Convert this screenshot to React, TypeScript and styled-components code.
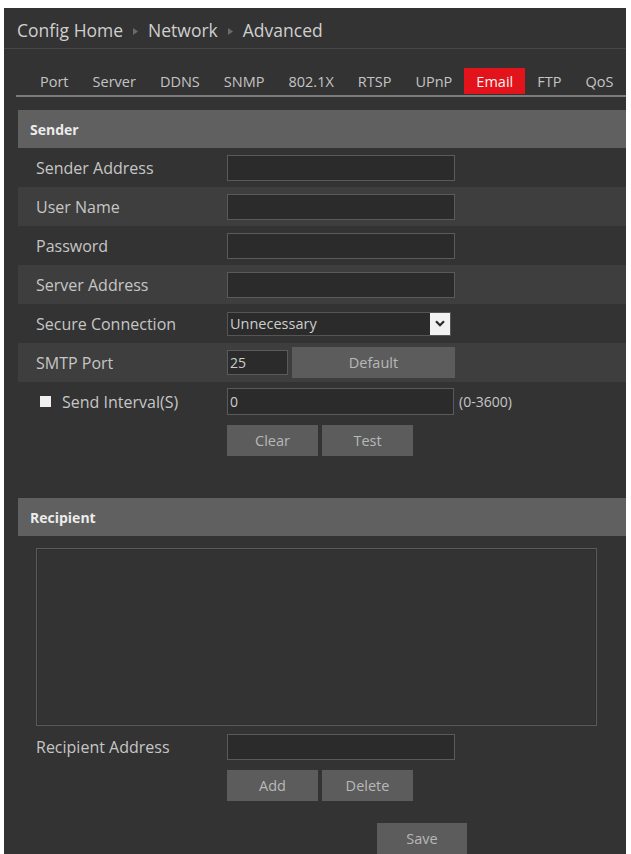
import React from "react";
import styled, { createGlobalStyle } from "styled-components";

const GlobalStyle = createGlobalStyle`
  html, body {
    margin: 0;
    padding: 0;
    background: #ffffff;
  }
  body {
    font-family: "Open Sans", "Noto Sans", sans-serif;
  }
  * {
    box-sizing: border-box;
  }
`;

const Page = styled.div`
  width: 631px;
  padding: 8px 5px 0 4px;
`;

const Panel = styled.div`
  background: #333333;
  min-height: 846px;
  display: flex;
  flex-direction: column;
  color: #c8c8c8;
`;

const Breadcrumb = styled.nav`
  height: 41px;
  display: flex;
  align-items: center;
  gap: 10px;
  padding: 6px 0 0 13px;
  font-size: 17.5px;
  color: #cfcfcf;
  border-bottom: 1px solid #474747;
`;

const Crumb = styled.span`
  line-height: 1;
`;

const CrumbArrow = () => (
  <svg width="5" height="7" viewBox="0 0 5 7" aria-hidden="true">
    <path d="M0 0 L5 3.5 L0 7 Z" fill="#6a6a6a" />
  </svg>
);

const TabBar = styled.div`
  height: 48px;
  margin-left: 12px;
  padding: 0 0 1px 12px;
  display: flex;
  align-items: flex-end;
  border-bottom: 2px solid #7c7c7c;
`;

const Tab = styled.span<{ $active?: boolean }>`
  height: 26px;
  padding: 0 12px;
  display: flex;
  align-items: center;
  font-size: 14.5px;
  color: ${(p) => (p.$active ? "#f4f4f4" : "#c4c4c4")};
  background: ${(p) => (p.$active ? "#e3131c" : "transparent")};
`;

const Section = styled.section<{ $top: number }>`
  margin: ${(p) => p.$top}px 0 0 14px;
  display: flex;
  flex-direction: column;
`;

const SectionHeader = styled.div`
  height: 38px;
  padding-left: 12px;
  display: flex;
  align-items: center;
  background: #606060;
  color: #ececec;
  font-size: 14px;
  font-weight: 700;
`;

const Row = styled.div<{ $shaded?: boolean; $top?: number }>`
  display: grid;
  grid-template-columns: 191px 1fr;
  align-items: center;
  height: 39px;
  margin-top: ${(p) => p.$top ?? 0}px;
  padding-left: 18px;
  background: ${(p) => (p.$shaded ? "#3e3e3e" : "transparent")};
`;

const Label = styled.span`
  font-size: 16px;
  color: #c6c6c6;
  display: flex;
  align-items: center;
`;

const Field = styled.div`
  display: flex;
  align-items: center;
  gap: 4px;
`;

const TextInput = styled.input<{ $w: number; $h?: number }>`
  width: ${(p) => p.$w}px;
  height: ${(p) => p.$h ?? 26}px;
  padding: 0 2px;
  background: #2b2b2b;
  border: 1px solid #5a5a5a;
  color: #cdcdcd;
  font-family: "Open Sans", sans-serif;
  font-size: 14px;
  outline: none;
`;

const SelectBox = styled.div`
  width: 224px;
  height: 24px;
  display: flex;
  align-items: center;
  background: #2b2b2b;
  border: 1px solid #555555;
  padding-left: 2px;
`;

const SelectValue = styled.span`
  flex: 1;
  font-size: 14.5px;
  color: #cdcdcd;
`;

const SelectArrow = styled.span`
  width: 20px;
  height: 22px;
  background: #f2f2f2;
  display: flex;
  align-items: center;
  justify-content: center;
`;

const Checkbox = styled.span`
  width: 11px;
  height: 11px;
  margin: 0 11px 0 4px;
  background: #f0f0f0;
`;

const Hint = styled.span`
  margin-left: 1px;
  font-size: 14px;
  color: #c6c6c6;
`;

const Button = styled.button<{ $w?: number }>`
  width: ${(p) => p.$w ?? 91}px;
  height: 31px;
  border: none;
  background: #5c5c5c;
  color: #b8b8b8;
  font-family: "Open Sans", sans-serif;
  font-size: 14.5px;
  padding: 0;
`;

const ActionRow = styled.div<{ $top: number }>`
  display: grid;
  grid-template-columns: 191px auto;
  margin-top: ${(p) => p.$top}px;
  padding-left: 18px;
  justify-content: start;
`;

const ButtonGroup = styled.div`
  display: flex;
  gap: 4px;
`;

const RecipientList = styled.div`
  margin: 12px 0 0 18px;
  width: 561px;
  height: 178px;
  border: 1px solid #5a5a5a;
  box-shadow: inset 0 0 0 1px #2e2e2e;
`;

const SaveBar = styled.div`
  margin-top: 22px;
  padding-left: 359px;
  display: flex;
`;

const tabs = ["Port", "Server", "DDNS", "SNMP", "802.1X", "RTSP", "UPnP", "Email", "FTP", "QoS"];

export default function App() {
  return (
    <>
      <GlobalStyle />
      <Page>
        <Panel>
          <Breadcrumb>
            <Crumb>Config Home</Crumb>
            <CrumbArrow />
            <Crumb>Network</Crumb>
            <CrumbArrow />
            <Crumb>Advanced</Crumb>
          </Breadcrumb>

          <TabBar>
            {tabs.map((t) => (
              <Tab key={t} $active={t === "Email"}>
                {t}
              </Tab>
            ))}
          </TabBar>

          <Section $top={13}>
            <SectionHeader>Sender</SectionHeader>
            <Row>
              <Label>Sender Address</Label>
              <Field>
                <TextInput $w={228} />
              </Field>
            </Row>
            <Row $shaded>
              <Label>User Name</Label>
              <Field>
                <TextInput $w={228} />
              </Field>
            </Row>
            <Row>
              <Label>Password</Label>
              <Field>
                <TextInput $w={228} type="password" />
              </Field>
            </Row>
            <Row $shaded>
              <Label>Server Address</Label>
              <Field>
                <TextInput $w={228} />
              </Field>
            </Row>
            <Row>
              <Label>Secure Connection</Label>
              <Field>
                <SelectBox>
                  <SelectValue>Unnecessary</SelectValue>
                  <SelectArrow>
                    <svg width="10" height="7" viewBox="0 0 10 7" aria-hidden="true">
                      <path d="M1 1.2 L5 5.2 L9 1.2" fill="none" stroke="#2a2a2a" strokeWidth="2.2" />
                    </svg>
                  </SelectArrow>
                </SelectBox>
              </Field>
            </Row>
            <Row $shaded>
              <Label>SMTP Port</Label>
              <Field>
                <TextInput $w={61} $h={25} defaultValue="25" />
                <Button $w={163}>Default</Button>
              </Field>
            </Row>
            <Row>
              <Label>
                <Checkbox />
                Send Interval(S)
              </Label>
              <Field>
                <TextInput $w={227} $h={27} defaultValue="0" />
                <Hint>(0-3600)</Hint>
              </Field>
            </Row>
            <ActionRow $top={4}>
              <span />
              <ButtonGroup>
                <Button>Clear</Button>
                <Button>Test</Button>
              </ButtonGroup>
            </ActionRow>
          </Section>

          <Section $top={42}>
            <SectionHeader>Recipient</SectionHeader>
            <RecipientList />
            <Row $top={1}>
              <Label>Recipient Address</Label>
              <Field>
                <TextInput $w={228} />
              </Field>
            </Row>
            <ActionRow $top={4}>
              <span />
              <ButtonGroup>
                <Button>Add</Button>
                <Button>Delete</Button>
              </ButtonGroup>
            </ActionRow>
            <SaveBar>
              <Button $w={90}>Save</Button>
            </SaveBar>
          </Section>
        </Panel>
      </Page>
    </>
  );
}
